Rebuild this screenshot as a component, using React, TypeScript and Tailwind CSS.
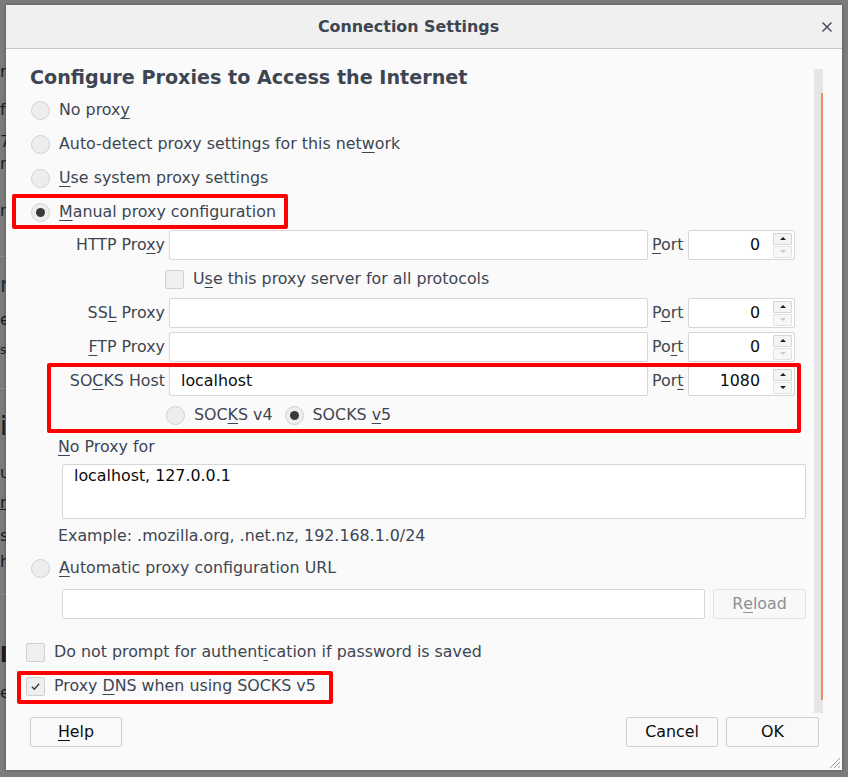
import type { ReactNode } from "react";

const text = "text-[#3d4652]";

function U({ children }: { children: ReactNode }) {
  return <span className="underline decoration-1 underline-offset-[3px]">{children}</span>;
}

function Radio({ checked = false }: { checked?: boolean }) {
  return (
    <span className="flex h-[19px] w-[19px] shrink-0 items-center justify-center rounded-full border border-[#d2d2d2] bg-[#ededed]">
      {checked && <span className="h-[9px] w-[9px] rounded-full bg-[#3a3a3a]" />}
    </span>
  );
}

function Checkbox({ checked = false }: { checked?: boolean }) {
  return (
    <span className="flex h-[19px] w-[19px] shrink-0 items-center justify-center rounded-[2px] border border-[#d0d0d0] bg-[#efefef]">
      {checked && (
        <svg viewBox="0 0 19 19" className="h-[19px] w-[19px]" aria-hidden>
          <path d="M5.5 9.8 8.2 12.5 13.5 6.5" fill="none" stroke="#3a3a3a" strokeWidth="1.6" />
        </svg>
      )}
    </span>
  );
}

function Field({ className = "", children }: { className?: string; children?: ReactNode }) {
  return (
    <div
      className={`flex h-[30px] items-center rounded-[2px] border border-[#d7d7d7] bg-white text-[#0c0c0d] ${className}`}
    >
      {children}
    </div>
  );
}

function PortBox({ value, canDown }: { value: string; canDown: boolean }) {
  return (
    <Field className="w-[107px] justify-end">
      <span>{value}</span>
      <div className="ml-[13px] mr-[2px] flex flex-col gap-[1px]">
        <div className="flex h-[12px] w-[19px] items-center justify-center rounded-[1px] border border-[#d6d6d6] bg-[#f4f4f4]">
          <span className="border-x-[3px] border-b-[3px] border-x-transparent border-b-[#1f1f1f]" />
        </div>
        <div className="flex h-[12px] w-[19px] items-center justify-center rounded-[1px] border border-[#e2e2e2] bg-[#f7f7f7]">
          <span
            className={`border-x-[3px] border-t-[3px] border-x-transparent ${
              canDown ? "border-t-[#1f1f1f]" : "border-t-[#c9c9c9]"
            }`}
          />
        </div>
      </div>
    </Field>
  );
}

function ProxyRow({ label, port, portKey }: { label: ReactNode; port: string; portKey: ReactNode }) {
  return (
    <div className="flex h-[30px] items-center pr-[11px]">
      <span className="w-[139px] shrink-0 text-right">{label}</span>
      <Field className="ml-[4px] flex-1" />
      <span className="ml-[4px] w-[36px] shrink-0">{portKey}</span>
      <PortBox value={port} canDown={port !== "0"} />
    </div>
  );
}

function RadioRow({ children, checked }: { children: ReactNode; checked?: boolean }) {
  return (
    <div className="flex h-[34px] items-center pl-[5px]">
      <Radio checked={checked} />
      <span className="ml-[9px]">{children}</span>
    </div>
  );
}

function Button({ children, className = "", disabled = false }: { children: ReactNode; className?: string; disabled?: boolean }) {
  return (
    <button
      type="button"
      className={`flex h-[30px] items-center justify-center rounded-[2px] border ${
        disabled ? "border-[#e3e3e3] bg-[#f8f8f8] text-[#8b8f96]" : "border-[#cfcfcf] bg-[#f9f9f9] text-[#0c0c0d]"
      } ${className}`}
    >
      {children}
    </button>
  );
}

function RedBox({ className }: { className: string }) {
  return <div className={`pointer-events-none absolute rounded-[2px] border-[4px] border-[#ff0000] ${className}`} />;
}

function BackdropStrip() {
  return (
    <div className="flex w-[6px] flex-col overflow-hidden text-[16px] leading-[20px] text-[#1c1c1c]">
      <div className="h-[62px] shrink-0" />
      <div className="h-[20px] shrink-0">r</div>
      <div className="h-[18px] shrink-0" />
      <div className="h-[20px] shrink-0">f</div>
      <div className="h-[12px] shrink-0" />
      <div className="h-[20px] shrink-0">7</div>
      <div className="h-[2px] shrink-0" />
      <div className="h-[20px] shrink-0">re</div>
      <div className="h-[27px] shrink-0" />
      <div className="h-[20px] shrink-0">n</div>
      <div className="h-[36px] shrink-0 border-b border-[#8c8c8c]" />
      <div className="h-[15px] shrink-0" />
      <div className="h-[26px] shrink-0 text-[22px] leading-[26px] text-[#16323e]">r</div>
      <div className="h-[12px] shrink-0" />
      <div className="h-[20px] shrink-0">e</div>
      <div className="h-[10px] shrink-0" />
      <div className="h-[20px] shrink-0 text-[12px]">s</div>
      <div className="h-[29px] shrink-0 border-b border-[#8c8c8c]" />
      <div className="h-[22px] shrink-0" />
      <div className="h-[30px] shrink-0 text-[26px] leading-[30px]">i</div>
      <div className="h-[22px] shrink-0" />
      <div className="h-[20px] shrink-0">u</div>
      <div className="h-[10px] shrink-0" />
      <div className="h-[20px] shrink-0 underline">m</div>
      <div className="h-[13px] shrink-0" />
      <div className="h-[20px] shrink-0">s</div>
      <div className="h-[6px] shrink-0" />
      <div className="h-[20px] shrink-0">h</div>
      <div className="h-[23px] shrink-0 border-b border-[#8c8c8c]" />
      <div className="h-[48px] shrink-0" />
      <div className="h-[24px] shrink-0 text-[22px] font-bold leading-[24px]">l</div>
      <div className="h-[16px] shrink-0" />
      <div className="h-[20px] shrink-0">e</div>
    </div>
  );
}

export default function App() {
  return (
    <div className="relative h-[777px] w-[848px] overflow-hidden bg-[#7b7b7b] font-['DejaVu_Sans',sans-serif]">
      <BackdropStrip />

      <div className="absolute left-[6px] top-[5px] flex h-[765px] w-[836px] flex-col bg-[#fafafa] shadow-[0_0_3px_rgba(0,0,0,0.35)]">
        <header className="relative flex h-[44px] shrink-0 items-center justify-center border-b border-[#c5c5c5] bg-[#f0f0f0] pr-[31px]">
          <h1 className={`text-[15.9px] font-bold ${text}`}>Connection Settings</h1>
          <button type="button" aria-label="Close" className="absolute right-[10px] top-[17px] h-[10px] w-[10px]">
            <svg viewBox="0 0 10 10" className="h-[10px] w-[10px]" aria-hidden>
              <path d="M0.5 0.5 9.5 9.5M9.5 0.5 0.5 9.5" stroke="#3d4652" strokeWidth="1.4" />
            </svg>
          </button>
        </header>

        <div className="mt-[20px] flex h-[644px] shrink-0">
          <div className={`flex flex-1 flex-col pl-[20px] pr-[8px] text-[15.85px] leading-[20px] ${text}`}>
            <h2 className="ml-[4px] h-[17px] shrink-0 text-[19.15px] font-bold leading-[17px]">
              Configure Proxies to Access the Internet
            </h2>
            <div className="h-[7px] shrink-0" />

            <RadioRow>
              No prox<U>y</U>
            </RadioRow>
            <RadioRow>
              Auto-detect proxy settings for this net<U>w</U>ork
            </RadioRow>
            <RadioRow>
              <U>U</U>se system proxy settings
            </RadioRow>
            <div className="relative">
              <RadioRow checked>
                <U>M</U>anual proxy configuration
              </RadioRow>
              <RedBox className="left-[-14px] top-[-1px] h-[35px] w-[276px]" />
            </div>

            <div className="mt-[1px]">
              <ProxyRow label={<>HTTP Pro<U>x</U>y</>} port="0" portKey={<><U>P</U>ort</>} />
            </div>
            <div className="flex h-[38px] items-center pl-[139px]">
              <Checkbox />
              <span className="ml-[9px]">
                U<U>s</U>e this proxy server for all protocols
              </span>
            </div>
            <ProxyRow label={<>SS<U>L</U> Proxy</>} port="0" portKey={<>P<U>o</U>rt</>} />
            <div className="mt-[4px]">
              <ProxyRow label={<><U>F</U>TP Proxy</>} port="0" portKey={<>Po<U>r</U>t</>} />
            </div>

            <div className="relative mt-[4px]">
              <div className="flex h-[30px] items-center pr-[11px]">
                <span className="w-[139px] shrink-0 text-right">
                  SO<U>C</U>KS Host
                </span>
                <Field className="ml-[4px] flex-1 pl-[11px]">localhost</Field>
                <span className="ml-[4px] w-[36px] shrink-0">
                  Por<U>t</U>
                </span>
                <PortBox value="1080" canDown />
              </div>
              <div className="flex h-[38px] items-center pl-[140px]">
                <Radio />
                <span className="ml-[9px]">
                  SOC<U>K</U>S v4
                </span>
                <span className="ml-[12px]">
                  <Radio checked />
                </span>
                <span className="ml-[9px]">
                  SOCKS <U>v</U>5
                </span>
              </div>
              <RedBox className="left-[21px] top-[-3px] h-[70px] w-[754px]" />
            </div>

            <div className="flex h-[26px] items-center pl-[32px]">
              <span>
                <U>N</U>o Proxy for
              </span>
            </div>
            <div className="ml-[36px] mt-[4px] h-[55px] shrink-0 rounded-[2px] border border-[#d7d7d7] bg-white pl-[11px] pt-[1px] text-[#0c0c0d]">
              localhost, 127.0.0.1
            </div>
            <div className="flex h-[34px] items-center pl-[32px]">
              Example: .mozilla.org, .net.nz, 192.168.1.0/24
            </div>

            <div className="flex h-[30px] items-center pl-[5px]">
              <Radio />
              <span className="ml-[9px]">
                <U>A</U>utomatic proxy configuration URL
              </span>
            </div>
            <div className="ml-[36px] mt-[6px] flex">
              <Field className="flex-1" />
              <Button disabled className="ml-[8px] w-[93px]">
                R<U>e</U>load
              </Button>
            </div>

            <div className="mt-[16px] flex h-[34px] items-center">
              <Checkbox />
              <span className="ml-[9px]">
                Do not prompt for authent<U>i</U>cation if password is saved
              </span>
            </div>
            <div className="relative flex h-[34px] items-center">
              <Checkbox checked />
              <span className="ml-[9px]">
                Proxy <U>D</U>NS when using SOCKS v5
              </span>
              <RedBox className="left-[-9px] top-[2px] h-[33px] w-[316px]" />
            </div>
          </div>

          <div className="flex w-[9px] shrink-0 justify-end bg-[#e6e6e6] pb-[13px] pt-[24px]">
            <div className="w-[2px] bg-[#ef8d68]" />
          </div>
          <div className="w-[19px] shrink-0" />
        </div>

        <footer className="mt-[4px] flex shrink-0 pl-[24px] pr-[23px] text-[15.85px]">
          <Button className="w-[92px]">
            <U>H</U>elp
          </Button>
          <div className="flex-1" />
          <Button className="w-[92px]">Cancel</Button>
          <Button className="ml-[8px] w-[93px]">OK</Button>
        </footer>

        <svg viewBox="0 0 14 14" className="absolute bottom-[1px] right-[1px] h-[14px] w-[14px]" aria-hidden>
          <path d="M13 3 3 13M13 7 7 13M13 11 11 13" stroke="#9a9a9a" strokeWidth="1" />
        </svg>
      </div>
    </div>
  );
}
